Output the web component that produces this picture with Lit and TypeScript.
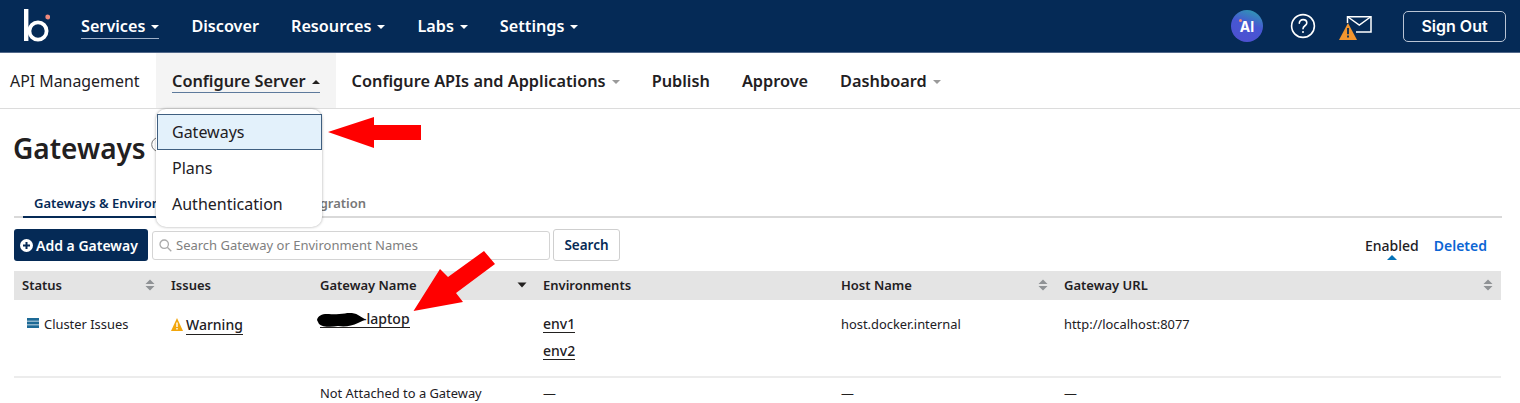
import { LitElement, html, css, svg } from 'lit';
import { customElement } from 'lit/decorators.js';

const caret = (up = false) => html`<span class="caret ${up ? 'up' : ''}"></span>`;

const sortIcon = html`<svg class="sort" width="10" height="12" viewBox="0 0 10 12">
  <path d="M5 0.5 9.5 5H0.5Z M0.5 7H9.5L5 11.5Z" fill="#8f9295"></path>
</svg>`;

const logo = svg`<path d="M4.2 0V32" stroke="#fff" stroke-width="4.4" fill="none"></path>
  <circle cx="16" cy="22" r="8.6" stroke="#fff" stroke-width="3.8" fill="none"></circle>
  <circle cx="25.7" cy="8" r="2.4" fill="#f0897c"></circle>`;

@customElement('app-root')
export class AppRoot extends LitElement {
  static styles = css`
    :host {
      display: block;
      position: relative;
      height: 403px;
      overflow: hidden;
      background: #fff;
      font-family: 'Noto Sans', sans-serif;
      color: #22201f;
    }

    /* Top navigation */
    .topbar {
      display: flex;
      align-items: center;
      height: 52px;
      padding: 0 14px 0 22px;
      background: #052a56;
      border-bottom: 1px solid #51688a;
      color: #fff;
    }
    .logo { margin-right: 31px; }
    .topnav { display: flex; gap: 32px; flex: 1; }
    .topnav a {
      display: flex;
      align-items: center;
      gap: 6px;
      height: 23px;
      font-size: 16.2px;
      font-weight: 600;
    }
    .topnav a.current { box-shadow: 0 1px 0 #9fb0c8; }
    .caret {
      width: 0;
      height: 0;
      border: 4px solid transparent;
      border-top-color: currentColor;
      border-bottom-width: 0;
      margin-top: 2px;
    }
    .caret.up {
      border-top-width: 0;
      border-top-color: transparent;
      border-bottom: 4px solid currentColor;
    }
    .tools { display: flex; align-items: center; }
    .ai {
      position: relative;
      display: flex;
      align-items: center;
      justify-content: center;
      width: 32px;
      height: 32px;
      border-radius: 50%;
      background: linear-gradient(200deg, #2ba6ad 0%, #4657d3 45%, #4f4fd0 100%);
      font-family: 'Inter', sans-serif;
      font-size: 14px;
      font-weight: 700;
    }
    .ai::before {
      content: '';
      position: absolute;
      left: 8px;
      top: 9px;
      width: 3px;
      height: 3px;
      border-radius: 50%;
      background: #f0897c;
    }
    .help { margin-left: 27px; }
    .mail { margin-left: 23px; }
    .signout {
      display: flex;
      align-items: center;
      justify-content: center;
      width: 103px;
      height: 31px;
      margin-left: 31px;
      box-sizing: border-box;
      border: 1px solid #b9c4d4;
      border-radius: 5px;
      font-family: 'Inter', sans-serif;
      font-size: 16px;
      font-weight: 600;
    }

    /* Secondary navigation */
    .subbar {
      display: flex;
      align-items: stretch;
      height: 55px;
      border-bottom: 1px solid #dcdcdc;
      font-size: 16px;
    }
    .product {
      display: flex;
      align-items: center;
      width: 156px;
      padding-left: 10px;
      box-sizing: border-box;
      font-size: 15.9px;
    }
    .subnav { display: flex; }
    .subnav a {
      display: flex;
      align-items: center;
      gap: 6px;
      padding: 0 16px;
      font-size: 16.3px;
      font-weight: 600;
    }
    .subnav a .caret { color: #9a9a9a; }
    .subnav a.open { background: #f4f4f4; }
    .subnav a.open .caret { color: #22201f; }
    .subnav .inner {
      display: flex;
      align-items: center;
      gap: 6px;
      height: 23px;
      box-shadow: 0 1px 0 #5d7a9c;
    }

    /* Page body */
    .content { padding: 0 18px 0 14px; }
    .title {
      display: flex;
      align-items: center;
      gap: 5px;
      height: 78px;
      margin-left: -1px;
      padding-bottom: 2px;
      font-size: 28px;
      font-weight: 600;
    }
    .title svg { margin-bottom: 7px; }
    .tabs {
      display: flex;
      gap: 13px;
      height: 29px;
      padding-left: 9px;
      border-bottom: 2px solid #d9d9d9;
      box-sizing: border-box;
      font-size: 13px;
      font-weight: 600;
      color: #777;
    }
    .tabs span { padding: 5px 11px 0; }
    .tabs .active {
      color: #052a56;
      border-bottom: 2px solid #052a56;
      height: 29px;
      box-sizing: border-box;
    }
    .toolbar {
      display: flex;
      align-items: center;
      gap: 3px;
      height: 32px;
      margin-top: 11px;
    }
    .add {
      display: flex;
      align-items: center;
      gap: 3px;
      width: 134px;
      height: 32px;
      padding-left: 6px;
      box-sizing: border-box;
      border-radius: 3px;
      background: #052a56;
      color: #fff;
      font-size: 14px;
      font-weight: 600;
    }
    .search {
      display: flex;
      align-items: center;
      gap: 4px;
      width: 398px;
      height: 29px;
      margin-left: 1px;
      padding-left: 6px;
      box-sizing: border-box;
      border: 1px solid #d4d4d4;
      border-radius: 3px;
      color: #808080;
      font-size: 13px;
    }
    .go {
      display: flex;
      align-items: center;
      justify-content: center;
      width: 67px;
      height: 32px;
      box-sizing: border-box;
      border: 1px solid #cfcfcf;
      border-radius: 3px;
      color: #052a56;
      font-size: 13.5px;
      font-weight: 600;
    }
    .states {
      display: flex;
      gap: 15px;
      margin-left: auto;
      padding-right: 15px;
      font-size: 14px;
      font-weight: 600;
      color: #0b65d4;
    }
    .states .on { position: relative; color: #22201f; font-weight: 500; }
    .states .on::after {
      content: '';
      position: absolute;
      left: 50%;
      bottom: -5px;
      margin-left: -5px;
      border: 5px solid transparent;
      border-top-width: 0;
      border-bottom-color: #0673b8;
    }

    /* Table */
    .grid {
      display: grid;
      grid-template-columns: 149px 149px 223px 298px 223px 445px;
      margin-top: 10px;
      font-size: 12.9px;
    }
    .head {
      display: flex;
      align-items: center;
      justify-content: space-between;
      height: 28px;
      padding: 0 8px 1px;
      background: #e4e4e4;
      font-size: 13px;
      font-weight: 600;
    }
    .cell {
      height: 78px;
      padding: 15px 8px 0;
      box-sizing: border-box;
      border-bottom: 2px solid #ececec;
    }
    .cell.last { height: auto; border: 0; padding-top: 6px; }
    .status, .issue { display: flex; align-items: flex-start; gap: 5px; }
    .status { padding-left: 5px; }
    .issue { font-size: 14px; font-weight: 500; gap: 3px; }
    .status svg { margin-top: 3px; }
    .issue svg { margin-top: 3px; }
    .link { border-bottom: 1px solid #22201f; font-weight: 500; }
    .name {
      display: block;
      width: fit-content;
      margin-top: -5px;
      padding-left: 42px;
      font-size: 14px;
      line-height: 17px;
    }
    .envs {
      display: flex;
      flex-direction: column;
      align-items: flex-start;
      gap: 9px;
      font-size: 14px;
      line-height: 17px;
    }
    .scribble { position: absolute; left: 316px; top: 312px; }

    /* Dropdown menu */
    .menu {
      position: absolute;
      left: 156px;
      top: 109px;
      width: 166px;
      height: 118px;
      padding-top: 5px;
      box-sizing: border-box;
      background: #fff;
      border-radius: 10px;
      box-shadow: 0 0 3px rgba(0, 0, 0, 0.35);
      font-size: 16px;
    }
    .menu div {
      display: flex;
      align-items: center;
      height: 36px;
      padding-left: 16px;
      box-sizing: border-box;
    }
    .menu .sel {
      margin: 0 0 0 1px;
      padding-left: 14px;
      background: #e3f1fb;
      border: 1px solid #3f5f80;
    }
    .arrow { position: absolute; left: 0; top: 0; pointer-events: none; }
  `;

  render() {
    return html`
      <header class="topbar">
        <svg class="logo" width="28" height="34" viewBox="0 0 28 34">${logo}</svg>
        <nav class="topnav">
          <a class="current">Services ${caret()}</a>
          <a>Discover</a>
          <a>Resources ${caret()}</a>
          <a>Labs ${caret()}</a>
          <a>Settings ${caret()}</a>
        </nav>
        <div class="tools">
          <div class="ai">AI</div>
          <svg class="help" width="26" height="26" viewBox="0 0 26 26" fill="none" stroke="#fff" stroke-width="1.6">
            <circle cx="13" cy="13" r="11.4"></circle>
            <path d="M9.3 10.2c0-2.2 1.7-3.6 3.8-3.6s3.7 1.3 3.7 3.3c0 2.8-3.8 2.9-3.8 5.8" stroke-linecap="round"></path>
            <circle cx="13" cy="19" r="1" fill="#fff" stroke="none"></circle>
          </svg>
          <svg class="mail" width="33" height="28" viewBox="0 0 33 28" fill="none">
            <path d="M8.5 11V4.7H32V20H17" stroke="#fff" stroke-width="1.5"></path>
            <path d="M9 5 20.3 13 31.5 5" stroke="#fff" stroke-width="1.5"></path>
            <path d="M9 11 18 28H0Z" fill="#f2952e"></path>
            <path d="M8.1 16H9.9V22.3H8.1Z M8.1 23.6H9.9V25.6H8.1Z" fill="#052a56"></path>
          </svg>
          <div class="signout">Sign Out</div>
        </div>
      </header>

      <div class="subbar">
        <div class="product">API Management</div>
        <nav class="subnav">
          <a class="open"><span class="inner">Configure Server ${caret(true)}</span></a>
          <a>Configure APIs and Applications ${caret()}</a>
          <a>Publish</a>
          <a>Approve</a>
          <a>Dashboard ${caret()}</a>
        </nav>
      </div>

      <main class="content">
        <div class="title">
          Gateways
          <svg width="15" height="15" viewBox="0 0 15 15" fill="none" stroke="#777" stroke-width="1">
            <circle cx="7.5" cy="7.5" r="6.8"></circle>
          </svg>
        </div>
        <div class="tabs">
          <span class="active">Gateways &amp; Environments</span>
          <span>Gateway Integration</span>
        </div>
        <div class="toolbar">
          <div class="add">
            <svg width="13" height="13" viewBox="0 0 13 13">
              <circle cx="6.5" cy="6.5" r="6.5" fill="#fff"></circle>
              <path d="M5.5 3H7.5V5.5H10V7.5H7.5V10H5.5V7.5H3V5.5H5.5Z" fill="#052a56"></path>
            </svg>
            Add a Gateway
          </div>
          <div class="search">
            <svg width="13" height="13" viewBox="0 0 13 13" fill="none" stroke="#aaa" stroke-width="1.3">
              <circle cx="5.2" cy="5.2" r="4.2"></circle>
              <path d="M8.3 8.3 12.3 12.3"></path>
            </svg>
            Search Gateway or Environment Names
          </div>
          <div class="go">Search</div>
          <div class="states">
            <span class="on">Enabled</span>
            <span>Deleted</span>
          </div>
        </div>

        <div class="grid">
          <div class="head">Status ${sortIcon}</div>
          <div class="head">Issues</div>
          <div class="head">Gateway Name
            <svg width="10" height="6" viewBox="0 0 10 6"><path d="M0.5 0.5H9.5L5 5.5Z" fill="#22201f"></path></svg>
          </div>
          <div class="head">Environments</div>
          <div class="head">Host Name ${sortIcon}</div>
          <div class="head">Gateway URL ${sortIcon}</div>

          <div class="cell">
            <div class="status">
              <svg width="12" height="10" viewBox="0 0 12 10" fill="#1d6a96">
                <path d="M0 0H12V2.8H0Z M0 3.6H12V6.4H0Z M0 7.2H12V10H0Z"></path>
              </svg>
              Cluster Issues
            </div>
          </div>
          <div class="cell">
            <div class="issue">
              <svg width="12" height="13" viewBox="0 0 12 13">
                <path d="M6 0 12 13H0Z" fill="#f2a60c"></path>
                <path d="M5.3 4.5H6.7V9H5.3Z M5.3 10H6.7V11.5H5.3Z" fill="#fff"></path>
              </svg>
              <span class="link">Warning</span>
            </div>
          </div>
          <div class="cell"><span class="link name">-laptop</span></div>
          <div class="cell">
            <div class="envs"><span class="link">env1</span><span class="link">env2</span></div>
          </div>
          <div class="cell">host.docker.internal</div>
          <div class="cell">http://localhost:8077</div>

          <div class="cell last"></div>
          <div class="cell last"></div>
          <div class="cell last">Not Attached to a Gateway</div>
          <div class="cell last">—</div>
          <div class="cell last">—</div>
          <div class="cell last">—</div>
        </div>
      </main>

      <svg class="scribble" width="52" height="16" viewBox="0 0 52 16">
        <path d="M1 8C2 3 7 1.5 13 2 19 3 24 1.5 29 1.5 33 0.5 39 1 42 3L49.5 7.5 42 11C36 14 29 15 22 14 15 15.5 6 15 3 12Z" fill="#000"></path>
      </svg>

      <div class="menu">
        <div class="sel">Gateways</div>
        <div>Plans</div>
        <div>Authentication</div>
      </div>

      <svg class="arrow" width="1520" height="403">
        <path d="M328 132 374 117V125H421V140H374V148Z" fill="#f00"></path>
        <path d="M413.5 311 440 269 448 277 484 251 495 264 456 293 463 302Z" fill="#f00"></path>
      </svg>
    `;
  }
}
